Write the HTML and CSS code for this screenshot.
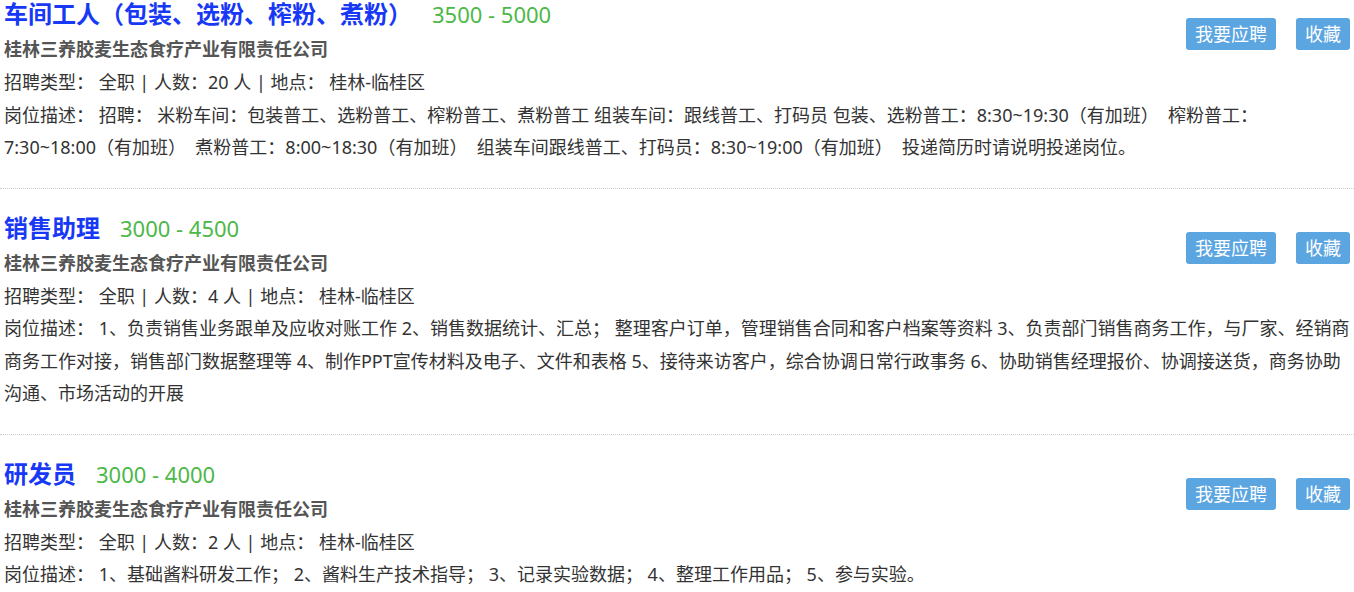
FILE: index.html
```html
<!DOCTYPE html>
<html lang="zh-CN">
<head>
  <meta charset="UTF-8">
  <title>招聘职位</title>
  <link rel="stylesheet" href="styles.css">
</head>
<body>

  <div class="job-list">
    <div class="job-item">
      <div class="job-actions">
        <a class="btn" href="#">我要应聘</a>
        <a class="btn" href="#">收藏</a>
      </div>
      <h3 class="job-title">车间工人（包装、选粉、榨粉、煮粉）<span class="salary">3500 - 5000</span></h3>
      <p class="company">桂林三养胶麦生态食疗产业有限责任公司</p>
      <p class="meta">招聘类型： 全职 | 人数：20 人 | 地点： 桂林-临桂区</p>
      <p class="desc">岗位描述： 招聘： 米粉车间：包装普工、选粉普工、榨粉普工、煮粉普工 组装车间：跟线普工、打码员 包装、选粉普工：8:30~19:30（有加班）&nbsp; 榨粉普工：<br>7:30~18:00（有加班）&nbsp; 煮粉普工：8:00~18:30（有加班）&nbsp; 组装车间跟线普工、打码员：8:30~19:00（有加班）&nbsp; 投递简历时请说明投递岗位。</p>
    </div>

    <div class="job-item">
      <div class="job-actions">
        <a class="btn" href="#">我要应聘</a>
        <a class="btn" href="#">收藏</a>
      </div>
      <h3 class="job-title">销售助理<span class="salary">3000 - 4500</span></h3>
      <p class="company">桂林三养胶麦生态食疗产业有限责任公司</p>
      <p class="meta">招聘类型： 全职 | 人数：4 人 | 地点： 桂林-临桂区</p>
      <p class="desc">岗位描述： 1、负责销售业务跟单及应收对账工作 2、销售数据统计、汇总； 整理客户订单，管理销售合同和客户档案等资料 3、负责部门销售商务工作，与厂家、经销商商务工作对接，销售部门数据整理等 4、制作PPT宣传材料及电子、文件和表格 5、接待来访客户，综合协调日常行政事务 6、协助销售经理报价、协调接送货，商务协助沟通、市场活动的开展</p>
    </div>

    <div class="job-item">
      <div class="job-actions">
        <a class="btn" href="#">我要应聘</a>
        <a class="btn" href="#">收藏</a>
      </div>
      <h3 class="job-title">研发员<span class="salary">3000 - 4000</span></h3>
      <p class="company">桂林三养胶麦生态食疗产业有限责任公司</p>
      <p class="meta">招聘类型： 全职 | 人数：2 人 | 地点： 桂林-临桂区</p>
      <p class="desc">岗位描述： 1、基础酱料研发工作； 2、酱料生产技术指导； 3、记录实验数据； 4、整理工作用品； 5、参与实验。</p>
    </div>
  </div>

</body>
</html>
```

FILE: styles.css
```css
body {
  margin: 0;
  font-family: "Noto Sans", "Noto Sans CJK SC", sans-serif;
  font-size: 18px;
  color: #333;
  background-color: #fff;
}

.job-list {
  margin-top: -25px;
}

.job-item {
  padding: 21px 4px 24px;
  border-bottom: 1px dotted #ccc;
}

.job-item p {
  margin: 0;
}

.job-actions {
  float: right;
  margin-top: 22px;
  display: flex;
  gap: 20px;
}

.btn {
  display: block;
  height: 32px;
  line-height: 32px;
  padding: 0 9px;
  background-color: #5ba5e1;
  color: #fff;
  font-size: 18px;
  text-decoration: none;
  border-radius: 3px;
}

.job-title {
  margin: 0;
  font-size: 24px;
  line-height: 36px;
  font-weight: bold;
  color: #1739f5;
}

.salary {
  margin-left: 20px;
  font-size: 22px;
  font-weight: normal;
  color: #4cb848;
}

.company {
  line-height: 34px;
  font-weight: bold;
  color: #555;
}

.meta {
  line-height: 32.5px;
}

.desc {
  line-height: 32.5px;
}
```
